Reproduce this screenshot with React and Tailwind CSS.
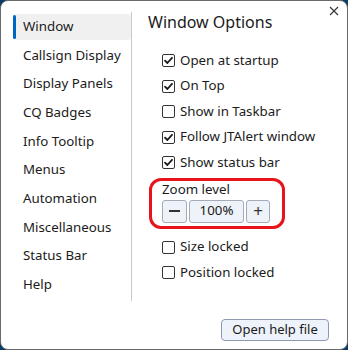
import React from "react";

const nav = ["Window","Callsign Display","Display Panels","CQ Badges","Info Tooltip","Menus","Automation","Miscellaneous","Status Bar","Help"];

function Box({ checked }) {
  return (
    <span className="w-[13px] h-[13px] border border-[#333] rounded-[2px] bg-white flex items-center justify-center shrink-0">
      {checked && (
        <svg width="11" height="11" viewBox="0 0 11 11">
          <path d="M2 5.6 L4.4 8 L9 2.8" fill="none" stroke="#1a1a1a" strokeWidth="1.8" strokeLinecap="round" strokeLinejoin="round" />
        </svg>
      )}
    </span>
  );
}

function Row({ checked, label }) {
  return (
    <div className="flex items-center gap-[5px] h-[25.5px]">
      <Box checked={checked} />
      <span>{label}</span>
    </div>
  );
}

export default function App() {
  return (
    <div className="w-[348px] h-[350px] bg-[#0b3a6b] text-[#1b1b1b]" style={{ fontFamily: '"Noto Sans", sans-serif' }}>
      <div className="relative w-[348px] h-[350px] bg-white border border-[#6a6a6a] rounded-[8px] flex text-[13.3px]">
        <div className="w-[131px] pl-[12px] pt-[2px] mt-[11px] h-[289px] border-r border-[#c8c8c8]">
          {nav.map((n, i) => (
            <div key={n} className={"relative h-[26px] mb-[2.67px] flex items-center pl-[10px] " + (i === 0 ? "bg-[#f0f0f0] rounded-[3px]" : "")}>
              {i === 0 && <span className="absolute left-0 top-[1px] w-[3px] h-[24px] bg-[#0067c0] rounded-full" />}
              {n}
            </div>
          ))}
        </div>
        <div className="flex-1 flex flex-col pl-[16px] pt-[10px]">
          <div className="text-[16px] leading-[22px] mb-[15px]">Window Options</div>
          <div className="pl-[14px] flex flex-col">
            <Row checked label="Open at startup" />
            <Row checked label="On Top" />
            <Row label="Show in Taskbar" />
            <Row checked label="Follow JTAlert window" />
            <Row checked label="Show status bar" />
            <div className="mt-[5px] leading-[17px]">Zoom level</div>
            <div className="flex gap-[2px] mt-[2px] h-[23px]">
              <div className="w-[25px] border border-[#a3abbb] bg-[#eef2f9] rounded-[3px] flex items-center justify-center">
                <span className="w-[11px] h-[1.3px] bg-[#333]" />
              </div>
              <div className="w-[55px] border border-[#a3abbb] bg-[#eef2f9] rounded-[3px] flex items-center justify-center">100%</div>
              <div className="w-[24px] border border-[#a3abbb] bg-[#eef2f9] rounded-[3px] flex items-center justify-center text-[17px] text-[#333]">+</div>
            </div>
            <div className="mt-[12px]">
              <Row label="Size locked" />
              <Row label="Position locked" />
            </div>
          </div>
        </div>
        <div className="absolute left-[148px] top-[177px] w-[136px] h-[51px] border-[3px] border-[#e8141c] rounded-[12px]" />
        <div className="absolute right-[8px] top-[5px]">
          <svg width="10" height="10" viewBox="0 0 10 10"><path d="M1 1 L9 9 M9 1 L1 9" stroke="#333" strokeWidth="1.1" /></svg>
        </div>
        <div className="absolute left-[220px] top-[318px] w-[108px] h-[22px] border border-[#8f9ab0] bg-[#eef2fa] rounded-[4px] flex items-center justify-center text-[13px]">Open help file</div>
      </div>
    </div>
  );
}
